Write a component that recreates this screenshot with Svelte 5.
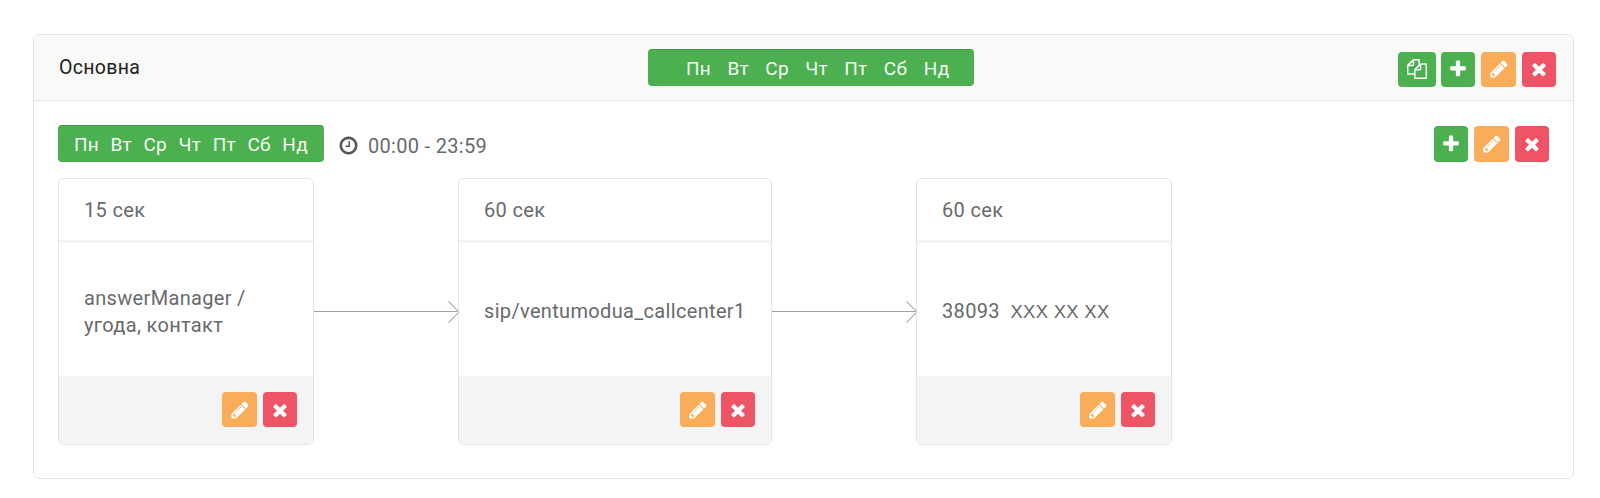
<script lang="ts">
  const days = ['Пн', 'Вт', 'Ср', 'Чт', 'Пт', 'Сб', 'Нд'];

  const steps = [
    { time: '15 сек', lines: ['answerManager /', 'угода, контакт'], width: 256 },
    { time: '60 сек', lines: ['sip/ventumodua_callcenter1'], width: 314 },
    { time: '60 сек', phone: '38093', masked: 'XXX XX XX', lines: [], width: 256 }
  ];

  const icons = {
    plus: 'M1600 736v192q0 40-28 68t-68 28h-416v416q0 40-28 68t-68 28h-192q-40 0-68-28t-28-68v-416h-416q-40 0-68-28t-28-68v-192q0-40 28-68t68-28h416v-416q0-40 28-68t68-28h192q40 0 68 28t28 68v416h416q40 0 68 28t28 68z',
    pencil: 'M491 1536l91-91-235-235-91 91v107h128v128h107zm523-928q0-22-22-22-10 0-17 7l-542 542q-7 7-7 17 0 22 22 22 10 0 17-7l542-542q7-7 7-17zm-54-192l416 416-832 832h-416v-416zm683 96q0 53-37 90l-166 166-416-416 166-165q36-38 90-38 53 0 91 38l235 234q37 39 37 91z',
    times: 'M1490 1322q0 40-28 68l-136 136q-28 28-68 28t-68-28l-294-294-294 294q-28 28-68 28t-68-28l-136-136q-28-28-28-68t28-68l294-294-294-294q-28-28-28-68t28-68l136-136q28-28 68-28t68 28l294 294 294-294q28-28 68-28t68 28l136 136q28 28 28 68t-28 68l-294 294 294 294q28 28 28 68z',
    files: 'M1696 384q40 0 68 28t28 68v1216q0 40-28 68t-68 28h-960q-40 0-68-28t-28-68v-288h-544q-40 0-68-28t-28-68v-672q0-40 20-88t48-76l408-408q28-28 76-48t88-20h416q40 0 68 28t28 68v328q68-40 128-40h416zm-544 213l-299 299h299v-299zm-640-384l-299 299h299v-299zm196 647l316-316v-416h-384v416q0 40-28 68t-68 28h-416v640h512v-256q0-40 20-88t48-76zm956 804v-1152h-384v416q0 40-28 68t-68 28h-416v640h896z',
    clock: 'M1024 544v448q0 14-9 23t-23 9h-320q-14 0-23-9t-9-23v-64q0-14 9-23t23-9h224v-352q0-14 9-23t23-9h64q14 0 23 9t9 23zm416 352q0-148-73-273t-198-198-273-73-273 73-198 198-73 273 73 273 198 198 273 73 273-73 198-198 73-273zm224 0q0 209-103 385.5t-279.5 279.5-385.5 103-385.5-103-279.5-279.5-103-385.5 103-385.5 279.5-279.5 385.5-103 385.5 103 279.5 279.5 103 385.5z'
  };
</script>

{#snippet icon(d, size = 20)}
  <svg width={size} height={size} viewBox="0 0 1792 1792" fill="currentColor"><path {d} /></svg>
{/snippet}

{#snippet btn(kind, d)}
  <button class="btn {kind}">{@render icon(d)}</button>
{/snippet}

<div class="page">
  <div class="panel">
    <div class="panel-head">
      <span class="title">Основна</span>
      <div class="days wide">
        {#each days as d}<span>{d}</span>{/each}
      </div>
      <div class="actions head-actions">
        {@render btn('green copy', icons.files)}
        {@render btn('green', icons.plus)}
        {@render btn('orange', icons.pencil)}
        {@render btn('red', icons.times)}
      </div>
    </div>

    <div class="panel-body">
      <div class="rule">
        <div class="days">
          {#each days as d}<span>{d}</span>{/each}
        </div>
        <span class="time">
          <span class="clock">{@render icon(icons.clock, 21)}</span>
          00:00 - 23:59
        </span>
        <div class="actions rule-actions">
          {@render btn('green', icons.plus)}
          {@render btn('orange', icons.pencil)}
          {@render btn('red', icons.times)}
        </div>
      </div>

      <div class="flow">
        {#each steps as step, i}
          {#if i > 0}
            <svg class="arrow" width="144" height="24" viewBox="0 0 144 24" fill="none">
              <path d="M0 11.5H144" stroke="#a3a3a3" />
              <path d="M134.5 1.5L145 12L134.5 22.5" stroke="#b4b4b4" stroke-width="1.2" />
            </svg>
          {/if}
          <div class="step" style="width: {step.width}px">
            <div class="step-head">{step.time}</div>
            <div class="step-body">
              {#each step.lines as line}<div class="line">{line}</div>{/each}
              {#if step.phone}
                <div class="line">{step.phone}{'  '}<span class="masked">{step.masked}</span></div>
              {/if}
            </div>
            <div class="step-foot">
              {@render btn('orange', icons.pencil)}
              {@render btn('red', icons.times)}
            </div>
          </div>
        {/each}
      </div>
    </div>
  </div>
</div>

<style>
  :global(body) {
    margin: 0;
    background: #fff;
    font-family: Roboto, 'Liberation Sans', sans-serif;
    color: #676a6c;
  }
  .page {
    height: 498px;
    padding: 34px 26px 0 33px;
    box-sizing: border-box;
  }
  .panel {
    width: 1541px;
    height: 445px;
    box-sizing: border-box;
    border: 1px solid #e4e4e4;
    border-radius: 6px;
    overflow: hidden;
  }
  .panel-head {
    display: grid;
    grid-template-columns: 590px 326px 1fr;
    align-items: center;
    height: 66px;
    box-sizing: border-box;
    padding: 0 17px 0 24px;
    background: #f9f9f7;
    border-bottom: 1px solid #e4e4e4;
  }
  .title {
    padding-left: 1px;
    font-size: 19.5px;
    color: #222;
    letter-spacing: 0.3px;
  }
  .days {
    display: inline-flex;
    align-items: center;
    box-sizing: border-box;
    height: 37px;
    width: 266px;
    padding: 0 16px;
    gap: 11.5px;
    background: #4caf50;
    border-top: 1px solid #3b9c40;
    border-radius: 4px;
    color: #f4fbf4;
    font-size: 19px;
    letter-spacing: 0.25px;
  }
  .days span {
    white-space: nowrap;
  }
  .days.wide {
    width: 326px;
    padding-left: 38px;
    gap: 16.4px;
  }
  .actions {
    display: flex;
    gap: 6px;
  }
  .head-actions {
    justify-content: flex-end;
    margin-top: 3px;
  }
  .head-actions .btn {
    height: 35px;
  }
  .btn {
    display: flex;
    align-items: center;
    justify-content: center;
    width: 34px;
    height: 36px;
    padding: 0;
    border: 0;
    border-radius: 4px;
    color: #fff;
    cursor: pointer;
  }
  .green { background: #4caf50; }
  .orange { background: #f9ad5a; width: 35px; }
  .red { background: #ef5366; }
  .copy { width: 38px; margin-right: -1px; }
  .panel-body {
    padding: 24px 24px 0;
  }
  .rule {
    display: flex;
    align-items: center;
    height: 37px;
  }
  .time {
    display: flex;
    align-items: center;
    margin-left: 14px;
    padding-top: 4px;
    font-size: 20px;
    letter-spacing: 0.3px;
    gap: 9px;
  }
  .clock {
    display: flex;
    color: #55585a;
  }
  .rule-actions {
    margin-left: auto;
  }
  .flow {
    display: flex;
    align-items: flex-start;
    margin-top: 16px;
  }
  .arrow {
    flex: none;
    margin-top: 122px;
    overflow: visible;
  }
  .step {
    flex: none;
    box-sizing: border-box;
    height: 267px;
    border: 1px solid #e4e4e4;
    border-radius: 6px;
    overflow: hidden;
    font-size: 20px;
    letter-spacing: 0.33px;
  }
  .step-head {
    height: 64px;
    box-sizing: border-box;
    padding-left: 25px;
    display: flex;
    align-items: center;
    border-bottom: 3px solid #f3f3f3;
  }
  .step-body {
    height: 133px;
    box-sizing: border-box;
    padding: 4px 25px 0;
    display: flex;
    flex-direction: column;
    justify-content: center;
    line-height: 27px;
  }
  .line {
    white-space: pre;
  }
  .masked {
    font-family: 'Liberation Sans', Arial, sans-serif;
    font-size: 18.4px;
  }
  .step-foot {
    display: flex;
    justify-content: flex-end;
    gap: 6px;
    height: 68px;
    box-sizing: border-box;
    padding: 16px 16px 0 0;
    background: #f4f4f4;
  }
  .step-foot .btn {
    height: 35px;
  }
</style>
